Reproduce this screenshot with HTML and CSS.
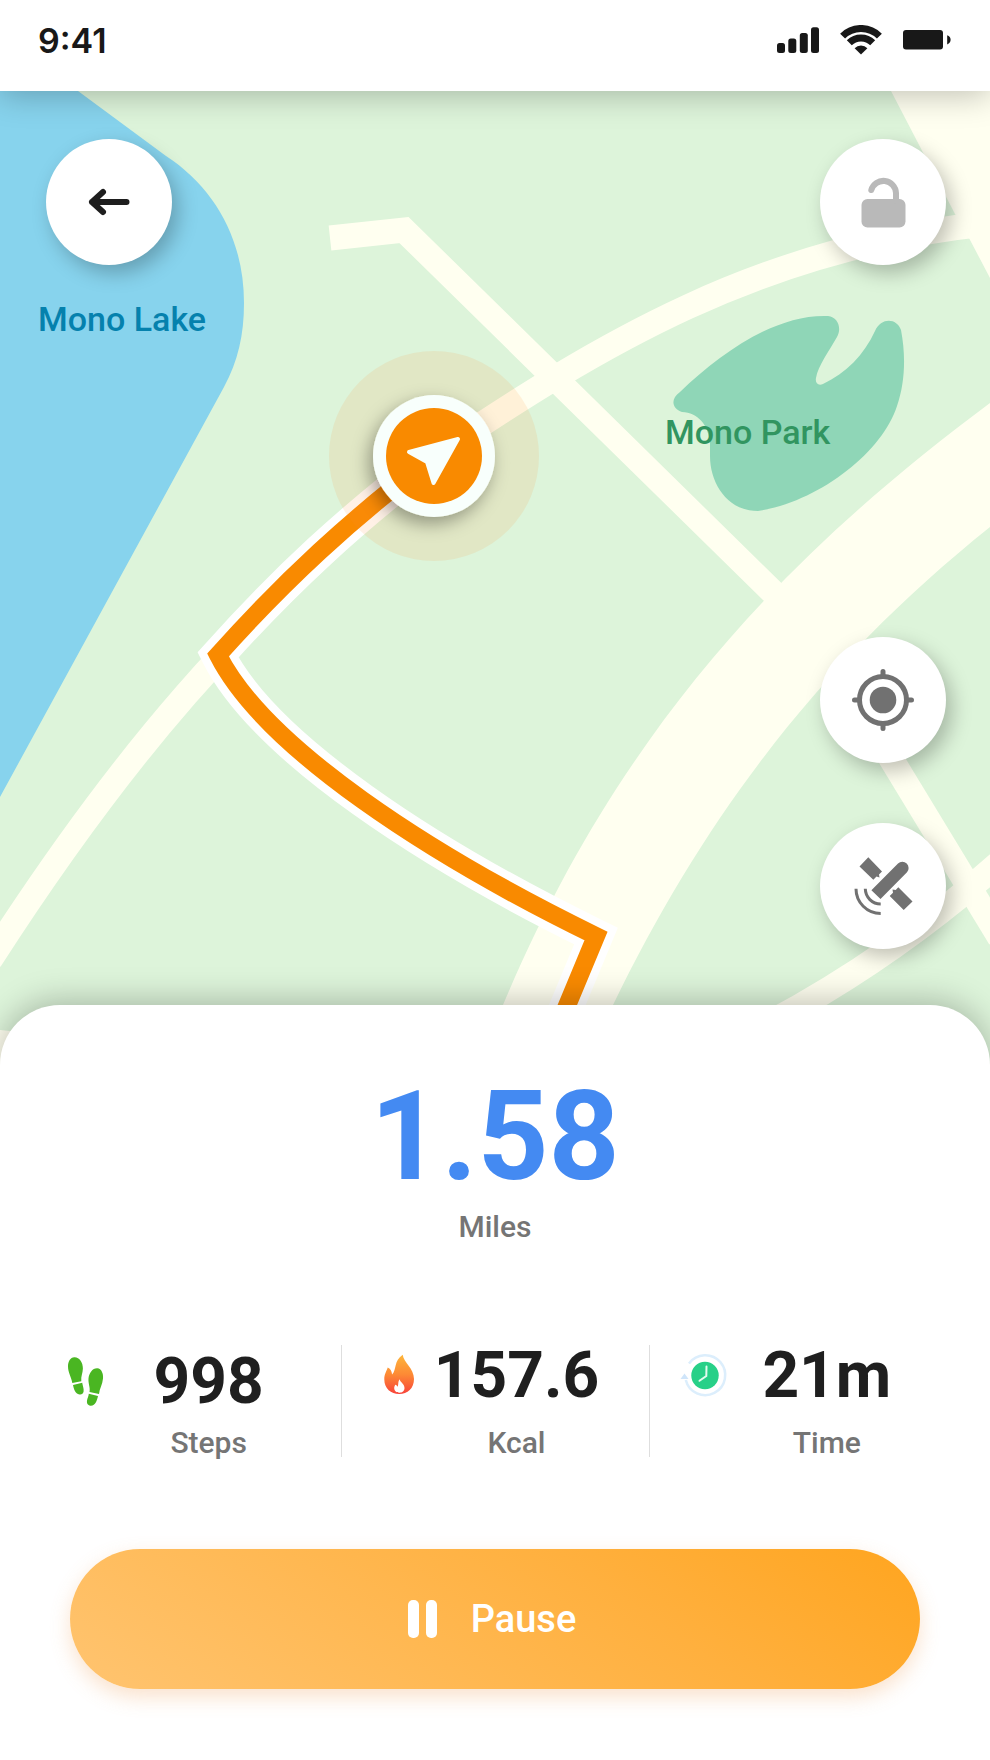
FILE: index.html
```html
<!DOCTYPE html>
<html lang="en">
<head>
    <meta charset="UTF-8">
    <meta name="viewport" content="width=device-width, initial-scale=1.0">
    <title>Walk Tracker</title>
    <link rel="stylesheet" href="styles.css">
</head>
<body>
    <header class="status-bar">
        <span class="clock">9:41</span>
        <svg class="status-icons" viewBox="0 0 176 32" aria-hidden="true">
            <!-- signal -->
            <rect x="1" y="18" width="8" height="10" rx="2.5"/>
            <rect x="12.3" y="13.6" width="8" height="14.4" rx="2.5"/>
            <rect x="23.8" y="8" width="8" height="20" rx="2.5"/>
            <rect x="35" y="2.3" width="8" height="25.7" rx="2.5"/>
            <!-- wifi -->
            <path class="wave" d="M66.6 11.1A26 26 0 0 1 103.4 11.1"/>
            <path class="wave" d="M73.3 17.8A16.5 16.5 0 0 1 96.7 17.8"/>
            <path d="M85 29.5L78.6 23.2A9 9 0 0 1 91.4 23.2Z"/>
            <!-- battery -->
            <rect x="127" y="5" width="40" height="19.6" rx="3"/>
            <path d="M171.2 10.2Q174.6 11.4 174.6 14.8T171.2 19.4Z"/>
        </svg>
    </header>

    <main class="map">
        <svg class="map-canvas" viewBox="0 91 990 980" preserveAspectRatio="xMidYMin slice">
            <defs>
                <filter id="markerShadow" x="-50%" y="-50%" width="200%" height="200%">
                    <feDropShadow dx="-4" dy="7" stdDeviation="9" flood-color="#000" flood-opacity="0.35"/>
                </filter>
            </defs>

            <path class="lake" d="M0 91H78L166 156C215 188 244 240 244 303C244 335 238 361 224 387L0 797Z"/>

            <!-- roads -->
            <path class="road-area" d="M891 91L955 214L969 238L990 278V91Z"/>
            <path class="road-area" d="M990 403C800 545 625 715 503 1005H613C710 805 830 655 990 527Z"/>
            <path class="road-area" d="M0 1030L60 1036V1080H0Z"/>
            <path class="road" d="M330 238L404 230L790 609"/>
            <path class="road" d="M-10 960C120 758 235 622 434 456C600 344 760 248 985 224"/>
            <path class="road" d="M870 724L1000 938"/>
            <path class="road" d="M760 1028Q890 960 1000 862"/>

            <path class="park" d="M680 392C722 352 776 314 828 316C838 317 842 328 837 337C829 351 818 366 816 378C815 383 818 386 823 384C846 373 864 355 875 331C881 317 897 318 901 330C906 356 905 383 897 406C882 453 818 502 758 511C727 511 710 483 710 456V443C708 424 698 413 682 412C672 409 670 399 680 392Z"/>

            <path class="route-outline" d="M434 456C350 520 285 580 218 655C265 748 430 855 596 936L559 1025"/>
            <path class="route" d="M434 456C350 520 285 580 218 655C265 748 430 855 596 936L559 1025"/>

            <text class="label label-lake" x="38" y="331">Mono Lake</text>
            <text class="label label-park" x="665" y="444">Mono Park</text>

            <!-- current position -->
            <circle class="halo" cx="434" cy="456" r="105"/>
            <circle class="marker-ring" cx="434" cy="456" r="61" filter="url(#markerShadow)"/>
            <circle class="marker-dot" cx="434" cy="456" r="48"/>
            <path class="marker-arrow" d="M409 452L458 439L433.500 483L427 462Z"/>
        </svg>

        <div class="controls">
            <button class="round-btn" type="button" aria-label="Back">
                <svg viewBox="0 0 64 64">
                    <path class="arrow" d="M49.500 32H15M26 22L15 32L26 42"/>
                </svg>
            </button>
            <div class="controls-side">
                <button class="round-btn" type="button" aria-label="Unlock screen">
                    <svg viewBox="0 0 64 64">
                        <rect class="lock-body" x="10.500" y="29" width="44" height="28.500" rx="6"/>
                        <path class="lock-shackle" d="M20.300 20A12.600 12.600 0 0 1 45 23V31"/>
                    </svg>
                </button>
                <div class="controls-group">
                    <button class="round-btn" type="button" aria-label="My location">
                        <svg viewBox="0 0 64 64">
                            <circle class="line" cx="32" cy="32" r="23.500"/>
                            <circle class="solid" cx="32" cy="32" r="13.300"/>
                            <path class="line" d="M32 3.500V8M32 56V60.500M3.500 32H8M56 32H60.500"/>
                        </svg>
                    </button>
                    <button class="round-btn" type="button" aria-label="Satellite view">
                        <svg viewBox="0 0 64 64">
                            <path class="solid" d="M17.300 3.200L8.500 12.500L22.300 25.700L25.500 22.500L28.500 23.500L28 20.500L31 17.400Z"/>
                            <path class="solid" d="M47.300 33.300L44.700 36L41.500 35.500L42 38.800L38.700 42L52.700 56L61.500 47.500Z"/>
                            <path class="solid" d="M20.400 36.200L47 9.500A6.300 6.300 0 0 1 56 18.300L29.500 45Z"/>
                            <path class="signal" d="M5 34.800A24.700 24.700 0 0 0 29.700 59.500M14.300 34.800A15.400 15.400 0 0 0 29.700 50"/>
                        </svg>
                    </button>
                </div>
            </div>
        </div>
    </main>

    <section class="sheet">
        <div class="distance">1.58</div>
        <div class="unit">Miles</div>

        <div class="stats">
            <div class="stat stat-steps">
                <div class="stat-row">
                    <svg class="stat-icon" viewBox="0 0 44 50" aria-hidden="true">
                        <g fill="#4ab622">
                            <path d="M8.300 .2C13.500 0 17 5.500 16.900 11.500C16.800 16 14.800 19.500 15.300 24.200L6.300 26C5.300 20 2 15.500 2 9.500C2 4.500 4.300 .3 8.300 .2Z"/>
                            <path d="M7 28L16.200 25.800C16.700 29 18 31.500 17.600 34.500C17.200 36.800 15.500 37.800 13.500 37.400C9 36.500 8 32.500 7 28Z"/>
                            <path d="M31.300 11.200C35.500 11.500 37.500 16.500 37 21.500C36.500 27.500 33.500 31.500 33 37L23.500 35C24.500 30.500 22 26.500 22.500 21.500C23 16 26.500 11 31.300 11.200Z"/>
                            <path d="M22.800 36.800L32 39C31 43.500 29.500 49 24.500 48.700C21.500 48.500 20.700 46 21 43.800C21.300 41.500 22.500 39.500 22.800 36.800Z"/>
                        </g>
                    </svg>
                    <span class="stat-value">998</span>
                </div>
                <div class="stat-label">Steps</div>
            </div>
            <div class="stat">
                <div class="stat-row">
                    <svg class="stat-icon" viewBox="0 0 44 44" aria-hidden="true">
                        <defs>
                            <linearGradient id="flame" x1="0" y1="0" x2="0" y2="1">
                                <stop offset="0" stop-color="#fdb63c"/>
                                <stop offset="0.5" stop-color="#fd8a35"/>
                                <stop offset="1" stop-color="#f8433a"/>
                            </linearGradient>
                        </defs>
                        <path fill="url(#flame)" d="M28.700 .7C29.500 8.500 40 14 40 25C40 34.500 33.500 40 25.200 40C17 40 10.300 34.500 10.300 25.500C10.300 20 12.500 17.500 13.700 13.500C16.300 14.500 17.700 17 18.100 20.500C23 15 19.500 7 28.700 .7Z"/>
                        <path fill="#fff" d="M25.700 25.300C26.300 28.500 30.500 30 30.500 34C30.500 37 28.300 38.700 25.500 38.700C22.500 38.700 20.200 37 20.200 34C20.200 32.500 20.800 31.700 21.200 30.700C22.500 31 23.100 31.700 23.500 32.800C24.900 30.500 23.500 28 25.700 25.300Z"/>
                    </svg>
                    <span class="stat-value">157.6</span>
                </div>
                <div class="stat-label">Kcal</div>
            </div>
            <div class="stat">
                <div class="stat-row">
                    <svg class="stat-icon" viewBox="0 0 44 44" aria-hidden="true">
                        <path d="M7 9.500A20 20 0 1 1 3.800 26" fill="none" stroke="#dceefc" stroke-width="2.500"/>
                        <path d="M-1.500 25L2.500 19.500L6.500 25Z" fill="#cfe5fa"/>
                        <circle cx="23" cy="21.500" r="13.700" fill="#27d088"/>
                        <path d="M24.500 12.500L24.300 22L17.500 26.800" fill="none" stroke="#e3fbef" stroke-width="2" stroke-linecap="round"/>
                    </svg>
                    <span class="stat-value">21m</span>
                </div>
                <div class="stat-label">Time</div>
            </div>
        </div>

        <button class="pause-btn" type="button">
            <svg class="pause-icon" viewBox="0 0 30 40" aria-hidden="true">
                <rect x="0" y="1" width="11" height="38" rx="5"/>
                <rect x="18" y="1" width="11" height="38" rx="5"/>
            </svg>
            Pause
        </button>
    </section>
</body>
</html>
```

FILE: styles.css
```css
* {
    box-sizing: border-box;
}
body {
    margin: 0;
    min-height: 100vh;
    display: flex;
    flex-direction: column;
    background: #fff;
    font-family: Roboto, "Liberation Sans", sans-serif;
}
button {
    border: none;
    font-family: inherit;
    cursor: pointer;
}

/* status bar */
.status-bar {
    position: relative;
    z-index: 2;
    display: flex;
    align-items: center;
    justify-content: space-between;
    padding: 20px 38px 29px;
    background: #fff;
    box-shadow: 0 4px 32px rgba(0, 0, 0, 0.25);
}
.clock {
    font-family: Inter, sans-serif;
    font-size: 34px;
    font-weight: 600;
    line-height: 42px;
    color: #181818;
}
.status-icons {
    width: 176px;
    height: 32px;
    fill: #181818;
}
.status-icons .wave {
    fill: none;
    stroke: #181818;
    stroke-width: 7;
}

/* map */
.map {
    position: relative;
    flex: 1;
    background: #ddf4da;
}
.map-canvas {
    position: absolute;
    width: 100%;
    height: 100%;
}
.lake {
    fill: #87d3ed;
}
.park {
    fill: #8fd6b7;
}
.road-area {
    fill: #fffff0;
}
.road {
    fill: none;
    stroke: #fffff0;
    stroke-width: 25;
}
.route-outline {
    fill: none;
    stroke: #fff;
    stroke-width: 34;
}
.route {
    fill: none;
    stroke: #f98a00;
    stroke-width: 18;
}
.label {
    font-size: 34px;
    font-weight: 500;
}
.label-lake {
    fill: #0581ad;
}
.label-park {
    fill: #319560;
}
.halo {
    fill: #ff8a30;
    opacity: 0.12;
}
.marker-ring {
    fill: #f8fffc;
}
.marker-dot {
    fill: #f98a00;
}
.marker-arrow {
    fill: #f8fffc;
    stroke: #f8fffc;
    stroke-width: 4;
    stroke-linejoin: round;
}
.controls {
    position: relative;
    display: flex;
    align-items: flex-start;
    justify-content: space-between;
    padding: 48px 44px 120px 46px;
}
.controls-side {
    display: flex;
    flex-direction: column;
    gap: 372px;
}
.controls-group {
    display: flex;
    flex-direction: column;
    gap: 60px;
}
.round-btn {
    display: flex;
    align-items: center;
    justify-content: center;
    width: 126px;
    height: 126px;
    padding: 0;
    border-radius: 50%;
    background: #fff;
    box-shadow: 6px 8px 20px rgba(0, 0, 0, 0.25);
}
.round-btn svg {
    width: 64px;
    height: 64px;
}
.arrow {
    fill: none;
    stroke: #1e1e1e;
    stroke-width: 6;
    stroke-linecap: round;
    stroke-linejoin: round;
}
.lock-body {
    fill: #b9b9b9;
}
.lock-shackle {
    fill: none;
    stroke: #b9b9b9;
    stroke-width: 6;
    stroke-linecap: round;
}
.line {
    fill: none;
    stroke: #717171;
    stroke-width: 5;
    stroke-linecap: round;
}
.solid {
    fill: #717171;
}
.signal {
    fill: none;
    stroke: #717171;
    stroke-width: 3;
}

/* bottom sheet */
.sheet {
    position: relative;
    margin-top: -64px;
    padding: 70px 34px 72px;
    border-radius: 60px 60px 0 0;
    background: #fff;
    box-shadow: 0 -4px 32px rgba(0, 0, 0, 0.25);
    text-align: center;
}
.distance {
    font-size: 124px;
    font-weight: 700;
    line-height: 124px;
    color: #448af2;
}
.unit {
    margin-top: 14px;
}
.unit,
.stat-label {
    font-size: 30px;
    font-weight: 500;
    line-height: 28px;
    color: #757575;
}
.stats {
    display: grid;
    grid-template-columns: repeat(3, 1fr);
    margin-top: 104px;
}
.stat {
    padding: 0 34px 0 32px;
}
.stat:last-child {
    padding-right: 28px;
}
.stat + .stat {
    border-left: 1px solid #dedede;
}
.stat-row {
    display: flex;
    align-items: center;
    height: 62px;
}
.stat-steps .stat-row {
    align-items: flex-end;
}
.stat-icon {
    flex: none;
    width: 44px;
    overflow: visible;
}
.stat-value {
    flex: 1;
    font-size: 64px;
    font-weight: 700;
    line-height: 50px;
    color: #1f1f1f;
}
.stat-label {
    margin: 22px 0 0 44px;
}
.pause-btn {
    display: flex;
    align-items: center;
    justify-content: center;
    gap: 33px;
    width: calc(100% - 72px);
    height: 140px;
    margin: 92px auto 0;
    padding: 0 6px 0 0;
    border-radius: 70px;
    background: linear-gradient(35deg, #ffc470, #ffb03e 65%, #ffa51f);
    box-shadow: 0 8px 20px rgba(240, 160, 90, 0.3);
    color: #fff;
    font-size: 38px;
    font-weight: 500;
}
.pause-icon {
    width: 30px;
    height: 40px;
    fill: #fff;
}
```
